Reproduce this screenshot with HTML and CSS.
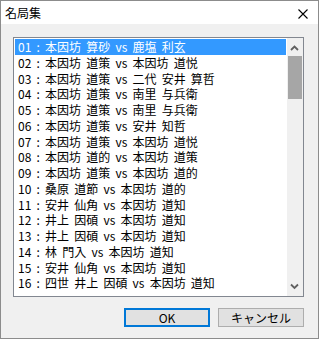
FILE: index.html
```html
<!DOCTYPE html>
<html lang="ja">
<head>
  <meta charset="UTF-8" />
  <title>名局集</title>
  <link rel="stylesheet" href="styles.css">
</head>
<body>
  <div class="dialog">
    <div class="titlebar">
      <span class="title">名局集</span>
      <svg class="close" width="10" height="10" viewBox="0 0 10 10">
        <path d="M0.5 0.5 L9.5 9.5 M9.5 0.5 L0.5 9.5" stroke="#000" stroke-width="1.1" fill="none"/>
      </svg>
    </div>

    <div class="content">
      <div class="listbox">
        <ul class="items">
          <li class="selected">01 : 本因坊 算砂 vs 鹿塩 利玄</li>
          <li>02 : 本因坊 道策 vs 本因坊 道悦</li>
          <li>03 : 本因坊 道策 vs 二代 安井 算哲</li>
          <li>04 : 本因坊 道策 vs 南里 与兵衛</li>
          <li>05 : 本因坊 道策 vs 南里 与兵衛</li>
          <li>06 : 本因坊 道策 vs 安井 知哲</li>
          <li>07 : 本因坊 道策 vs 本因坊 道悦</li>
          <li>08 : 本因坊 道的 vs 本因坊 道策</li>
          <li>09 : 本因坊 道策 vs 本因坊 道的</li>
          <li>10 : 桑原 道節 vs 本因坊 道的</li>
          <li>11 : 安井 仙角 vs 本因坊 道知</li>
          <li>12 : 井上 因碩 vs 本因坊 道知</li>
          <li>13 : 井上 因碩 vs 本因坊 道知</li>
          <li>14 : 林 門入 vs 本因坊 道知</li>
          <li>15 : 安井 仙角 vs 本因坊 道知</li>
          <li>16 : 四世 井上 因碩 vs 本因坊 道知</li>
        </ul>
        <div class="scrollbar">
          <div class="arrow">
            <svg width="16" height="16" viewBox="0 0 16 16">
              <polyline points="4,12 7.5,8.5 11,12" stroke="#606060" stroke-width="1.8" fill="none"/>
            </svg>
          </div>
          <div class="track">
            <div class="thumb"></div>
          </div>
          <div class="arrow">
            <svg width="16" height="16" viewBox="0 0 16 16">
              <polyline points="4,4.5 7.5,8 11,4.5" stroke="#606060" stroke-width="1.8" fill="none"/>
            </svg>
          </div>
        </div>
      </div>

      <div class="buttons">
        <button class="btn default">OK</button>
        <button class="btn">キャンセル</button>
      </div>
    </div>
  </div>
</body>
</html>
```

FILE: styles.css
```css
* {
  margin: 0;
  padding: 0;
  box-sizing: border-box;
}

body {
  font-family: "Noto Sans CJK JP", "Noto Sans", sans-serif;
  font-size: 12px;
  background: #f0f0f0;
}

.dialog {
  width: 319px;
  height: 339px;
  border: 1px solid #8c8c8c;
  background: #f0f0f0;
  display: flex;
  flex-direction: column;
}

.titlebar {
  height: 23px;
  background: #fff;
  display: flex;
  align-items: center;
  justify-content: space-between;
  padding: 0 10px 0 4px;
  color: #000;
}

.title {
  font-size: 12px;
  line-height: 14px;
  padding-top: 1px;
}

.close {
  display: block;
  margin-top: 2px;
}

.content {
  flex: 1;
  padding: 13px 14px 0 12px;
}

/* list */
.listbox {
  width: 291px;
  height: 260px;
  border: 1px solid #828790;
  background: #fff;
  display: flex;
}

.items {
  list-style: none;
  flex: 1;
  padding: 1px;
  overflow: hidden;
}

.items li {
  height: 15.75px;
  line-height: 15.75px;
  padding-left: 3px;
  white-space: nowrap;
  word-spacing: 2.5px;
  color: #000;
}

.items li.selected {
  background: #3399ff;
  color: #fff;
}

.scrollbar {
  width: 16px;
  background: #f0f0f0;
  display: flex;
  flex-direction: column;
}

.arrow {
  height: 16px;
}

.arrow svg {
  display: block;
}

.track {
  flex: 1;
  padding: 2px 1px 0 1px;
}

.thumb {
  height: 43px;
  background: #a6a6a6;
}

/* buttons */
.buttons {
  display: flex;
  justify-content: flex-end;
  gap: 8px;
  margin-top: 11px;
}

.btn {
  width: 86px;
  height: 19px;
  border: 1px solid #adadad;
  background: #e1e1e1;
  font-family: "Noto Sans CJK JP", "Noto Sans", sans-serif;
  font-size: 12px;
  line-height: 15px;
  color: #000;
}

.btn.default {
  border: 2px solid #0078d7;
}
```
